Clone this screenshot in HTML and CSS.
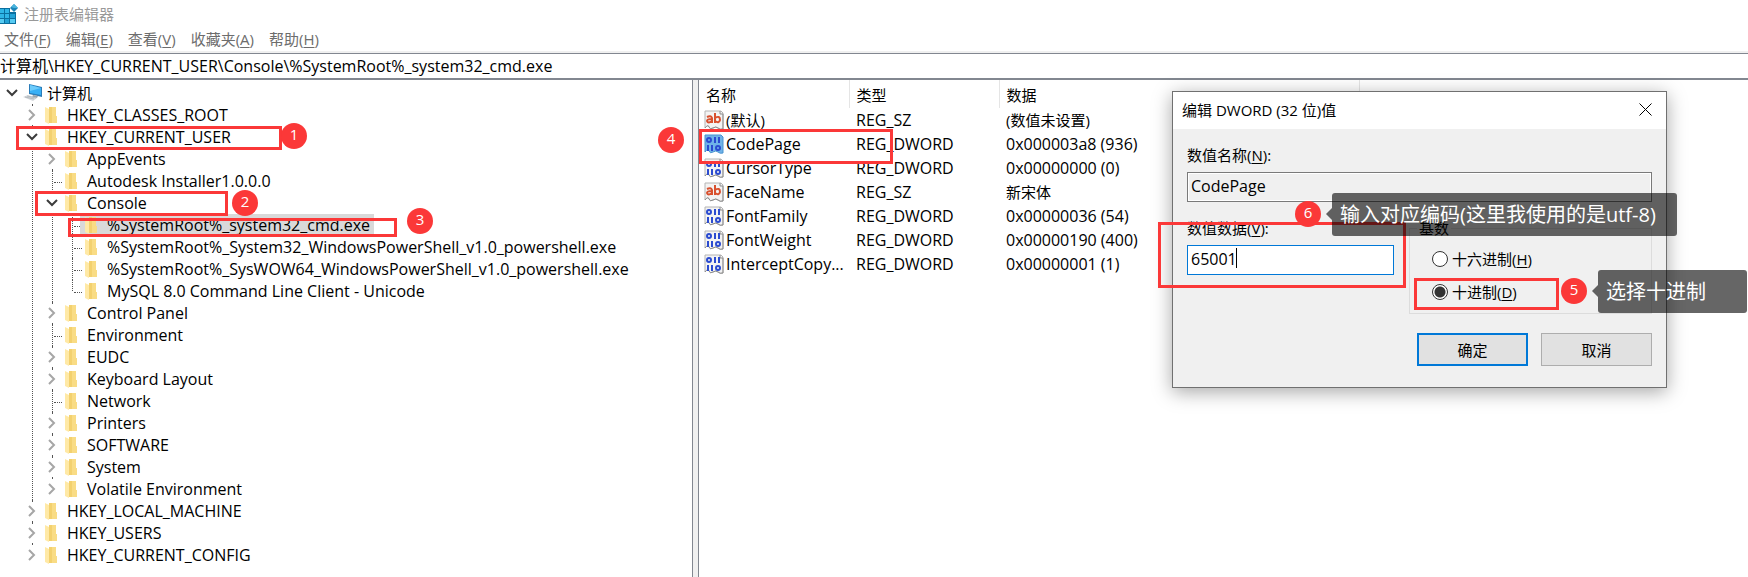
FILE: index.html
```html
<!DOCTYPE html>
<html lang="zh-CN">
<head>
<meta charset="UTF-8">
<meta name="viewport" content="width=device-width, initial-scale=1">
<title>注册表编辑器</title>
<link rel="stylesheet" href="styles.css">
</head>
<body>

<svg class="defs" width="0" height="0">
  <symbol id="folder" viewBox="0 0 20 20">
    <path d="M6 2H13V11H14V18H6Z" fill="#f3d16f"/>
    <path d="M9 2H13V11H14V18H9Z" fill="#f9dc85"/>
    <path d="M2 2L6 4V19L2 17Z" fill="#ffe9a6"/>
  </symbol>
  <symbol id="computer" viewBox="0 0 20 20">
    <path d="M6 1L19 4V14L6 11Z" fill="#2b7cb8"/>
    <path d="M7 2L18 5V12L7 10Z" fill="#39b0f5"/>
    <path d="M7 2L18 5L7 8Z" fill="#6ccbfb"/>
    <path d="M10 12L15 13L14 15L9 14Z" fill="#9aa3aa"/>
    <path d="M0 14L5 12L14 15L10 18Z" fill="#d4d8db"/>
    <path d="M2 14L11 16M4 13L13 15" stroke="#a7adb2" stroke-width=".7"/>
  </symbol>
  <symbol id="open" viewBox="0 0 20 22">
    <path d="M5 8L10 13L15 8" fill="none" stroke="#3c3c3c" stroke-width="2"/>
  </symbol>
  <symbol id="closed" viewBox="0 0 20 22">
    <path d="M7 6L12 11L7 16" fill="none" stroke="#a6a6a6" stroke-width="2"/>
  </symbol>
  <symbol id="page" viewBox="0 0 20 20">
    <path d="M1 1H17L19 3V19Q16 20 14 18T9 18T5 17T1 18Z" fill="#f3f3f3" stroke="#b5b5b5"/>
    <path d="M16 1V4H19V19Q16 20 14 18T9 18T5 17T1 18" fill="none" stroke="#8e8e8e"/>
  </symbol>
  <symbol id="sz" viewBox="0 0 20 20">
    <use href="#page"/>
    <g fill="none" stroke="#d9502e" stroke-width="2">
      <path d="M3 7Q7 5 8 8V13M8 9Q3 9 3 11Q4 14 8 11"/>
      <path d="M11 3V13M11 8Q16 5 16 10Q15 14 11 11"/>
    </g>
  </symbol>
  <symbol id="bits" viewBox="0 0 20 20">
    <g fill="none" stroke="currentColor" stroke-width="2">
      <ellipse cx="5" cy="6" rx="2" ry="2"/>
      <path d="M11 3V9M15 3V9M4 11V17M8 11V17"/>
      <ellipse cx="14" cy="14" rx="2" ry="2"/>
    </g>
  </symbol>
  <symbol id="dword" viewBox="0 0 20 20">
    <use href="#page"/>
    <use href="#bits"/>
  </symbol>
  <symbol id="dword-sel" viewBox="0 0 20 20">
    <path d="M1 1H17L19 3V19Q16 20 14 18T9 18T5 17T1 18Z" fill="#6fb3e8" stroke="#4a93cf"/>
    <use href="#bits"/>
  </symbol>
</svg>

<div class="window">
  <header class="titlebar">
    <svg class="app-icon" width="19" height="24" viewBox="0 0 19 24">
      <path d="M0 7H10V11H16V23H0Z" fill="#0b6f9f"/>
      <path d="M0 8H4V12H0ZM5 8H9V12H5ZM0 13H4V17H0ZM5 13H9V17H5Z" fill="#2fb5e6"/>
      <path d="M10 13H15V17H10ZM5 18H9V22H5Z" fill="#22a2d6"/>
      <path d="M0 18H4V22H0ZM10 18H15V22H10Z" fill="#57cbf2"/>
      <path d="M14 3L18 7L14 11L10 7Z" fill="#1c85b8"/>
      <path d="M14 3L18 7L14 7L11 6Z" fill="#48b4de"/>
    </svg>
    <h1>注册表编辑器</h1>
  </header>
  <nav class="menu">
    <button>文件(<u>F</u>)</button>
    <button>编辑(<u>E</u>)</button>
    <button>查看(<u>V</u>)</button>
    <button>收藏夹(<u>A</u>)</button>
    <button>帮助(<u>H</u>)</button>
  </nav>
  <input class="address" type="text" aria-label="地址" value="计算机\HKEY_CURRENT_USER\Console\%SystemRoot%_system32_cmd.exe">

  <main class="panes">
    <div class="tree">
      <div class="row">
        <button class="toggle" aria-label="折叠"><svg><use href="#open"/></svg></button>
        <span class="item cn"><svg><use href="#computer"/></svg>计算机</span>
      </div>
      <ul>
        <li><div class="row"><button class="toggle" aria-label="展开"><svg><use href="#closed"/></svg></button><span class="item"><svg><use href="#folder"/></svg>HKEY_CLASSES_ROOT</span></div></li>
        <li>
          <div class="row"><button class="toggle" aria-label="折叠"><svg><use href="#open"/></svg></button><span class="item"><svg><use href="#folder"/></svg>HKEY_CURRENT_USER</span></div>
          <ul>
            <li><div class="row"><button class="toggle" aria-label="展开"><svg><use href="#closed"/></svg></button><span class="item"><svg><use href="#folder"/></svg>AppEvents</span></div></li>
            <li><div class="row"><span class="branch"></span><span class="item"><svg><use href="#folder"/></svg>Autodesk Installer1.0.0.0</span></div></li>
            <li>
              <div class="row"><button class="toggle" aria-label="折叠"><svg><use href="#open"/></svg></button><span class="item"><svg><use href="#folder"/></svg>Console</span></div>
              <ul>
                <li><div class="row"><span class="branch"></span><span class="item selected"><svg><use href="#folder"/></svg>%SystemRoot%_system32_cmd.exe</span></div></li>
                <li><div class="row"><span class="branch"></span><span class="item"><svg><use href="#folder"/></svg>%SystemRoot%_System32_WindowsPowerShell_v1.0_powershell.exe</span></div></li>
                <li><div class="row"><span class="branch"></span><span class="item"><svg><use href="#folder"/></svg>%SystemRoot%_SysWOW64_WindowsPowerShell_v1.0_powershell.exe</span></div></li>
                <li><div class="row"><span class="branch"></span><span class="item"><svg><use href="#folder"/></svg>MySQL 8.0 Command Line Client - Unicode</span></div></li>
              </ul>
            </li>
            <li><div class="row"><button class="toggle" aria-label="展开"><svg><use href="#closed"/></svg></button><span class="item"><svg><use href="#folder"/></svg>Control Panel</span></div></li>
            <li><div class="row"><span class="branch"></span><span class="item"><svg><use href="#folder"/></svg>Environment</span></div></li>
            <li><div class="row"><button class="toggle" aria-label="展开"><svg><use href="#closed"/></svg></button><span class="item"><svg><use href="#folder"/></svg>EUDC</span></div></li>
            <li><div class="row"><button class="toggle" aria-label="展开"><svg><use href="#closed"/></svg></button><span class="item"><svg><use href="#folder"/></svg>Keyboard Layout</span></div></li>
            <li><div class="row"><span class="branch"></span><span class="item"><svg><use href="#folder"/></svg>Network</span></div></li>
            <li><div class="row"><button class="toggle" aria-label="展开"><svg><use href="#closed"/></svg></button><span class="item"><svg><use href="#folder"/></svg>Printers</span></div></li>
            <li><div class="row"><button class="toggle" aria-label="展开"><svg><use href="#closed"/></svg></button><span class="item"><svg><use href="#folder"/></svg>SOFTWARE</span></div></li>
            <li><div class="row"><button class="toggle" aria-label="展开"><svg><use href="#closed"/></svg></button><span class="item"><svg><use href="#folder"/></svg>System</span></div></li>
            <li><div class="row"><button class="toggle" aria-label="展开"><svg><use href="#closed"/></svg></button><span class="item"><svg><use href="#folder"/></svg>Volatile Environment</span></div></li>
          </ul>
        </li>
        <li><div class="row"><button class="toggle" aria-label="展开"><svg><use href="#closed"/></svg></button><span class="item"><svg><use href="#folder"/></svg>HKEY_LOCAL_MACHINE</span></div></li>
        <li><div class="row"><button class="toggle" aria-label="展开"><svg><use href="#closed"/></svg></button><span class="item"><svg><use href="#folder"/></svg>HKEY_USERS</span></div></li>
        <li><div class="row"><button class="toggle" aria-label="展开"><svg><use href="#closed"/></svg></button><span class="item"><svg><use href="#folder"/></svg>HKEY_CURRENT_CONFIG</span></div></li>
      </ul>
    </div>

    <div class="list">
      <table>
        <colgroup><col class="col-name"><col class="col-type"><col class="col-data"><col></colgroup>
        <thead>
          <tr><th>名称</th><th>类型</th><th>数据</th><th></th></tr>
        </thead>
        <tbody>
          <tr><td class="cn"><svg><use href="#sz"/></svg>(默认)</td><td>REG_SZ</td><td class="cn">(数值未设置)</td></tr>
          <tr><td><svg><use href="#dword-sel"/></svg>CodePage</td><td>REG_DWORD</td><td>0x000003a8 (936)</td></tr>
          <tr><td><svg><use href="#dword"/></svg>CursorType</td><td>REG_DWORD</td><td>0x00000000 (0)</td></tr>
          <tr><td><svg><use href="#sz"/></svg>FaceName</td><td>REG_SZ</td><td class="cn">新宋体</td></tr>
          <tr><td><svg><use href="#dword"/></svg>FontFamily</td><td>REG_DWORD</td><td>0x00000036 (54)</td></tr>
          <tr><td><svg><use href="#dword"/></svg>FontWeight</td><td>REG_DWORD</td><td>0x00000190 (400)</td></tr>
          <tr><td><svg><use href="#dword"/></svg>InterceptCopy...</td><td>REG_DWORD</td><td>0x00000001 (1)</td></tr>
        </tbody>
      </table>
    </div>
  </main>
</div>

<form class="dialog">
  <div class="dialog-title">
    <h2>编辑 DWORD (32 位)值</h2>
    <button type="button" class="close" aria-label="关闭">
      <svg width="13" height="13" viewBox="0 0 13 13"><path d="M.5 .5L12.5 12.5M12.5 .5L.5 12.5" stroke="#000" fill="none"/></svg>
    </button>
  </div>
  <div class="dialog-body">
    <label for="value-name">数值名称(<u>N</u>):</label>
    <input id="value-name" type="text" value="CodePage" readonly>
    <div class="columns">
      <div class="value">
        <label for="value-data">数值数据(<u>V</u>):</label>
        <input id="value-data" type="text" value="65001">
        <span class="caret"></span>
      </div>
      <fieldset>
        <legend>基数</legend>
        <label><input type="radio" name="base"><span>十六进制(<u>H</u>)</span></label>
        <label><input type="radio" name="base" checked><span>十进制(<u>D</u>)</span></label>
      </fieldset>
    </div>
    <div class="buttons">
      <button type="button" class="primary">确定</button>
      <button type="button">取消</button>
    </div>
  </div>
</form>

<!-- step marks -->
<div class="mark mark-1"></div>
<div class="mark mark-2"></div>
<div class="mark mark-3"></div>
<div class="mark mark-4"></div>
<div class="mark mark-5"></div>
<div class="mark mark-6"></div>
<div class="tip tip-5">选择十进制</div>
<div class="tip tip-6">输入对应编码(这里我使用的是utf-8)</div>
<span class="badge badge-1">1</span>
<span class="badge badge-2">2</span>
<span class="badge badge-3">3</span>
<span class="badge badge-4">4</span>
<span class="badge badge-5">5</span>
<span class="badge badge-6">6</span>

</body>
</html>
```
FILE: styles.css
```css
* {
  box-sizing: border-box;
}
body {
  margin: 0;
  background: #fff;
  color: #000;
  font-family: "Open Sans", "Noto Sans CJK SC", sans-serif;
  font-size: 16px;
  overflow: hidden;
}
button, input {
  font: inherit;
  color: inherit;
}
.defs {
  position: absolute;
}
.cn {
  font-size: 15px;
}

/* window */
.window {
  display: flex;
  flex-direction: column;
  height: 100vh;
}
.titlebar {
  display: flex;
  align-items: center;
  gap: 5px;
  height: 26px;
  color: #999;
}
.titlebar h1 {
  margin: 0;
  font-size: 15px;
  font-weight: normal;
}
.menu {
  display: flex;
  gap: 15px;
  height: 27px;
  padding: 0 4px;
  border-bottom: 2px solid #f0f0f0;
}
.menu button {
  padding: 0;
  border: none;
  background: none;
  color: #6d6d6d;
  font-size: 15px;
  line-height: 27px;
}
u {
  text-underline-offset: 2px;
}
.address {
  width: 100%;
  height: 27px;
  padding: 0 0 2px;
  border: solid #828790;
  border-width: 1px 0 2px;
  outline: none;
}
.panes {
  flex: 1;
  display: flex;
  min-height: 0;
  background: #f0f0f0;
}

/* tree */
.tree {
  flex: 0 0 693px;
  padding: 2px 2px 0;
  border-right: 1px solid #828790;
  background: #fff;
  overflow: hidden;
}
.tree ul {
  margin: 0;
  padding: 0;
  list-style: none;
}
.tree ul ul {
  padding-left: 20px;
}
.tree > ul {
  padding-left: 20px;
}
.tree li {
  position: relative;
}
.tree li::before {
  content: "";
  position: absolute;
  top: 0;
  bottom: 0;
  left: 10px;
  border-left: 1px dotted #555;
}
.tree li:last-child::before {
  bottom: auto;
  height: 11px;
}
.row {
  position: relative;
  display: flex;
  height: 22px;
  line-height: 22px;
  white-space: nowrap;
}
.toggle {
  width: 20px;
  height: 18px;
  margin: 2px 0;
  padding: 0;
  border: none;
  background: #fff;
}
.toggle svg {
  display: block;
  width: 20px;
  height: 22px;
  margin-top: -2px;
}
.branch {
  width: 20px;
  height: 12px;
  padding-left: 12px;
}
.branch::after {
  content: "";
  display: block;
  height: 12px;
  border-bottom: 1px dotted #555;
}
.item {
  display: flex;
  gap: 4px;
  align-items: center;
  margin-left: -2px;
  padding: 0 4px 0 3px;
}
.item svg {
  width: 20px;
  height: 20px;
}
.selected {
  background: #d9d9d9;
}

/* value list */
.list {
  flex: 1;
  margin-left: 5px;
  border-left: 1px solid #828790;
  background: #fff;
}
table {
  width: 100%;
  border-collapse: collapse;
  table-layout: fixed;
}
.col-name {
  width: 150px;
}
.col-type {
  width: 150px;
}
.col-data {
  width: 360px;
}
th {
  height: 28px;
  padding: 0 7px;
  border-right: 1px solid #e5e5e5;
  font-size: 15px;
  font-weight: normal;
  text-align: left;
}
th:last-child {
  border-right: none;
}
td {
  height: 24px;
  padding: 0 7px;
  line-height: 24px;
  white-space: nowrap;
}
td:first-child {
  display: flex;
  gap: 2px;
  align-items: center;
  padding: 0 5px;
}
td svg {
  width: 20px;
  height: 20px;
  color: #2b4bd0;
}

/* dialog */
.dialog {
  position: absolute;
  left: 1172px;
  top: 91px;
  width: 495px;
  border: 1px solid #707070;
  background: #f0f0f0;
  font-size: 15px;
  box-shadow: 0 4px 18px rgba(0, 0, 0, .35);
}
.dialog-title {
  display: flex;
  justify-content: space-between;
  align-items: center;
  height: 37px;
  padding: 0 14px 2px 9px;
  background: #fff;
}
.dialog-title h2 {
  margin: 0;
  font-size: 15px;
  font-weight: normal;
}
.close {
  padding: 0;
  border: none;
  background: none;
  line-height: 0;
}
.dialog-body {
  padding: 16px 14px 21px;
}
.dialog label {
  display: block;
  line-height: 20px;
}
.dialog input[type="text"] {
  display: block;
  width: 100%;
  height: 30px;
  margin-top: 7px;
  padding: 0 3px 2px;
  border: 1px solid #7a7a7a;
  background: #f0f0f0;
  font-size: 16px;
  outline: none;
}
#value-name {
  box-shadow: inset 0 0 0 1px #fff;
}
.dialog #value-data {
  border-color: #0078d7;
  background: #fff;
}
.columns {
  display: flex;
  gap: 15px;
  margin-top: 16px;
}
.value {
  position: relative;
  flex: 0 0 207px;
}
.caret {
  position: absolute;
  left: 49px;
  top: 30px;
  width: 1px;
  height: 20px;
  background: #000;
}
fieldset {
  flex: 1;
  margin: 0;
  padding: 4px 22px 5px;
  border: 1px solid #dcdcdc;
}
legend {
  margin-left: -15px;
  padding: 0 2px;
  line-height: 20px;
}
.dialog fieldset label {
  display: flex;
  align-items: center;
  gap: 4px;
  height: 33px;
}
input[type="radio"] {
  appearance: none;
  width: 16px;
  height: 16px;
  margin: 0;
  border: 1px solid #333;
  border-radius: 50%;
  background: #fff;
}
input[type="radio"]:checked {
  background: radial-gradient(circle, #333 5px, #fff 6px);
}
.buttons {
  display: flex;
  justify-content: flex-end;
  gap: 13px;
  margin-top: 19px;
}
.buttons button {
  width: 111px;
  height: 33px;
  padding: 0;
  border: 1px solid #adadad;
  background: #e1e1e1;
}
.buttons .primary {
  border: 2px solid #0078d7;
}

/* red frames, numbers and tips over the window */
.mark {
  position: absolute;
  border: 3px solid #fb3838;
}
.mark-1 { left: 16px; top: 126px; width: 266px; height: 24px; }
.mark-2 { left: 35px; top: 191px; width: 193px; height: 25px; }
.mark-3 { left: 68px; top: 218px; width: 329px; height: 19px; }
.mark-4 { left: 699px; top: 129px; width: 194px; height: 35px; }
.mark-5 { left: 1414px; top: 278px; width: 145px; height: 32px; }
.mark-6 { left: 1158px; top: 222px; width: 248px; height: 66px; }
.badge {
  position: absolute;
  width: 26px;
  height: 26px;
  border-radius: 50%;
  background: #fb3838;
  color: #fff;
  font-size: 15px;
  line-height: 23px;
  text-align: center;
}
.badge-1 { left: 281px; top: 123px; }
.badge-2 { left: 232px; top: 190px; }
.badge-3 { left: 407px; top: 208px; }
.badge-4 { left: 658px; top: 127px; }
.badge-5 { left: 1561px; top: 278px; }
.badge-6 { left: 1295px; top: 201px; }
.tip {
  position: absolute;
  height: 43px;
  padding: 0 8px;
  border-radius: 3px;
  background: rgba(0, 0, 0, .6);
  color: #fff;
  font-size: 20px;
  line-height: 43px;
  white-space: nowrap;
}
.tip::before {
  content: "";
  position: absolute;
  left: -6px;
  top: 15px;
  border: solid transparent;
  border-width: 6px 6px 6px 0;
  border-right-color: rgba(0, 0, 0, .6);
}
.tip-5 { left: 1598px; top: 270px; width: 149px; }
.tip-6 { left: 1332px; top: 193px; width: 345px; }
```
